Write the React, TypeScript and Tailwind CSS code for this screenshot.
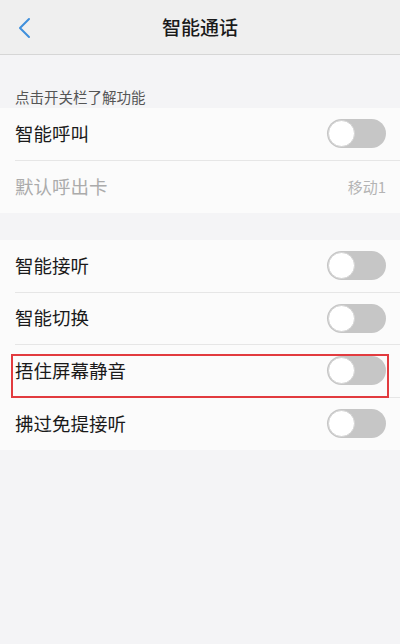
import React from "react";

const font = {
  fontFamily: '"Noto Sans CJK SC", "Noto Sans", sans-serif',
};

function Toggle() {
  return (
    <div className="w-[59px] h-[29px] rounded-full bg-[#c6c6c6] flex items-center pl-[1px]">
      <div className="w-[27px] h-[27px] rounded-full bg-white border border-[#d4d4d4]" />
    </div>
  );
}

interface RowProps {
  label: string;
  last?: boolean;
  dim?: boolean;
  value?: string;
  highlight?: boolean;
}

function Row({ label, last, dim, value, highlight }: RowProps) {
  return (
    <div className="pl-[15px]">
      <div
        className={
          "h-[52.5px] flex items-center justify-between pr-[14px] relative " +
          (last ? "" : "border-b border-[#e6e6e6]")
        }
      >
        <span
          className={
            "text-[18.5px] " + (dim ? "text-[#ababab]" : "text-[#1a1a1a]")
          }
        >
          {label}
        </span>
        {value ? (
          <span className="text-[15px] text-[#b4b4b4]">{value}</span>
        ) : (
          <Toggle />
        )}
        {highlight && (
          <div className="absolute left-[-4px] right-[11px] top-[9px] h-[44px] border-2 border-[#e23b3f]" />
        )}
      </div>
    </div>
  );
}

export default function App() {
  return (
    <div className="w-[400px] h-[644px] bg-[#f4f4f6] overflow-hidden" style={font}>
      <div className="h-[55px] bg-[#efefef] border-b border-[#d6d6d6] flex items-center justify-center relative">
        <svg
          className="absolute left-[17px] top-[17px]"
          width="14"
          height="22"
          viewBox="0 0 14 22"
          fill="none"
        >
          <path
            d="M12 2 L3 11 L12 20"
            stroke="#3f8fdc"
            strokeWidth="2"
            strokeLinecap="round"
            strokeLinejoin="round"
          />
        </svg>
        <span className="text-[19px] font-medium text-[#1a1a1a]">智能通话</span>
      </div>
      <div className="pt-[31px] pb-[1px] pl-[15px] h-[53px] text-[14.5px] text-[#555]">
        点击开关栏了解功能
      </div>
      <div className="bg-[#fbfbfb]">
        <Row label="智能呼叫" />
        <Row label="默认呼出卡" value="移动1" dim last />
      </div>
      <div className="h-[27px]" />
      <div className="bg-[#fbfbfb]">
        <Row label="智能接听" />
        <Row label="智能切换" />
        <Row label="捂住屏幕静音" highlight />
        <Row label="拂过免提接听" last />
      </div>
    </div>
  );
}
